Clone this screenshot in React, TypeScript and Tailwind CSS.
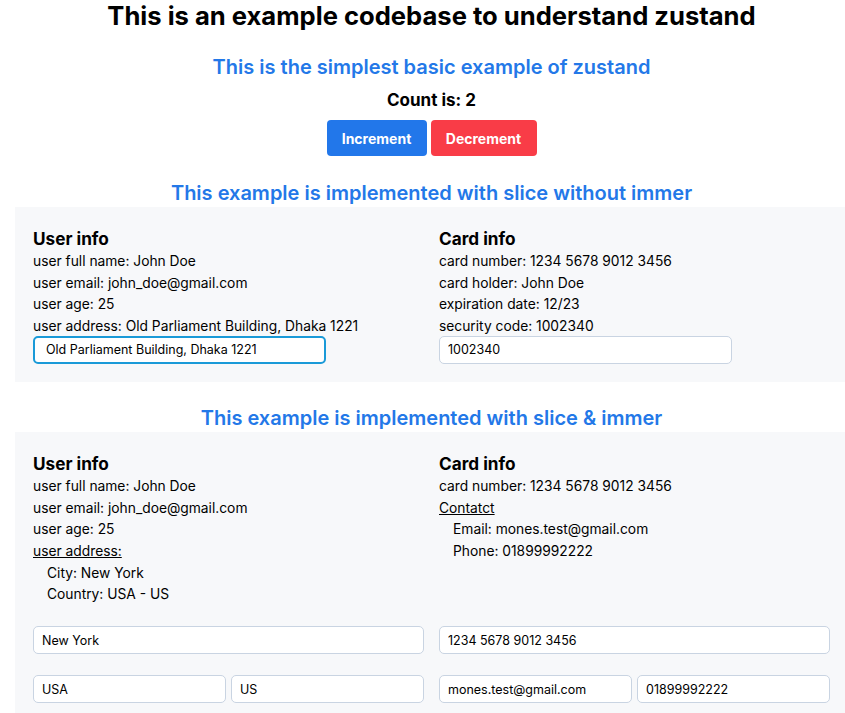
import React, { useState } from "react";

const font = { fontFamily: "Inter, 'Noto Sans', sans-serif" };

function Field({ value, focused, className }: { value: string; focused?: boolean; className?: string }) {
  return (
    <input
      readOnly
      value={value}
      className={
        "h-[28px] rounded-[5px] bg-white text-[12.5px] text-black outline-none " +
        (focused
          ? "border-2 border-[#1a9ad8] pl-[11px] "
          : "border border-[#c9d4e2] pl-[8px] ") +
        (className ?? "")
      }
    />
  );
}

function Line({ children, indent }: { children: React.ReactNode; indent?: boolean }) {
  return <p className={"text-[13.8px] leading-[21.7px] text-black " + (indent ? "pl-[14px]" : "")}>{children}</p>;
}

function Heading({ children }: { children: React.ReactNode }) {
  return <h3 className="text-[17.2px] font-bold leading-[24px] text-black">{children}</h3>;
}

function SectionTitle({ children }: { children: React.ReactNode }) {
  return <h2 className="text-center text-[20px] font-semibold leading-[28px] text-[#2378e8]">{children}</h2>;
}

export default function App() {
  const [count, setCount] = useState(2);

  return (
    <div className="w-[845px] overflow-hidden bg-white" style={font}>
      <div className="ml-[15px] w-[833px]">
        <h1 className="pt-[1px] text-center text-[25.6px] font-bold leading-[30px] text-black">
          This is an example codebase to understand zustand
        </h1>

        <div className="mt-[22px]">
          <SectionTitle>This is the simplest basic example of zustand</SectionTitle>
          <p className="mt-[8px] text-center text-[17px] font-bold leading-[22px] text-black">Count is: {count}</p>
          <div className="mt-[9px] flex justify-center gap-[4px]">
            <button
              onClick={() => setCount(count + 1)}
              className="h-[36px] w-[100px] rounded-[4px] bg-[#2277ea] text-[14px] font-bold text-white"
            >
              Increment
            </button>
            <button
              onClick={() => setCount(count - 1)}
              className="h-[36px] w-[106px] rounded-[4px] bg-[#f93c47] text-[14px] font-bold text-white"
            >
              Decrement
            </button>
          </div>
        </div>

        {/* slice without immer */}
        <div className="mt-[23px]">
          <SectionTitle>This example is implemented with slice without immer</SectionTitle>
          <div className="grid grid-cols-2 gap-x-[15px] bg-[#f7f8fa] px-[18px] pt-[20px] pb-[18px]">
            <div className="flex flex-col">
              <Heading>User info</Heading>
              <Line>user full name: John Doe</Line>
              <Line>user email: john_doe@gmail.com</Line>
              <Line>user age: 25</Line>
              <Line>user address: Old Parliament Building, Dhaka 1221</Line>
              <Field value="Old Parliament Building, Dhaka 1221" focused className="-mt-[2px] w-3/4" />
            </div>
            <div className="flex flex-col">
              <Heading>Card info</Heading>
              <Line>card number: 1234 5678 9012 3456</Line>
              <Line>card holder: John Doe</Line>
              <Line>expiration date: 12/23</Line>
              <Line>security code: 1002340</Line>
              <Field value="1002340" className="-mt-[2px] w-3/4" />
            </div>
          </div>
        </div>

        {/* slice & immer */}
        <div className="mt-[22px]">
          <SectionTitle>This example is implemented with slice &amp; immer</SectionTitle>
          <div className="grid grid-cols-2 gap-x-[15px] bg-[#f7f8fa] px-[18px] pt-[20px] pb-[17px]">
            <div className="flex flex-col">
              <Heading>User info</Heading>
              <Line>user full name: John Doe</Line>
              <Line>user email: john_doe@gmail.com</Line>
              <Line>user age: 25</Line>
              <Line>
                <span className="underline">user address:</span>
              </Line>
              <Line indent>City: New York</Line>
              <Line indent>Country: USA - US</Line>
              <Field value="New York" className="mt-[20px] w-full" />
              <div className="mt-[21px] grid grid-cols-2 gap-[5px]">
                <Field value="USA" />
                <Field value="US" />
              </div>
            </div>
            <div className="flex flex-col">
              <Heading>Card info</Heading>
              <Line>card number: 1234 5678 9012 3456</Line>
              <Line>
                <span className="underline">Contatct</span>
              </Line>
              <Line indent>Email: mones.test@gmail.com</Line>
              <Line indent>Phone: 01899992222</Line>
              <div className="flex-1" />
              <Field value="1234 5678 9012 3456" className="mt-[20px] w-full" />
              <div className="mt-[21px] grid grid-cols-2 gap-[5px]">
                <Field value="mones.test@gmail.com" />
                <Field value="01899992222" />
              </div>
            </div>
          </div>
        </div>
      </div>
    </div>
  );
}
